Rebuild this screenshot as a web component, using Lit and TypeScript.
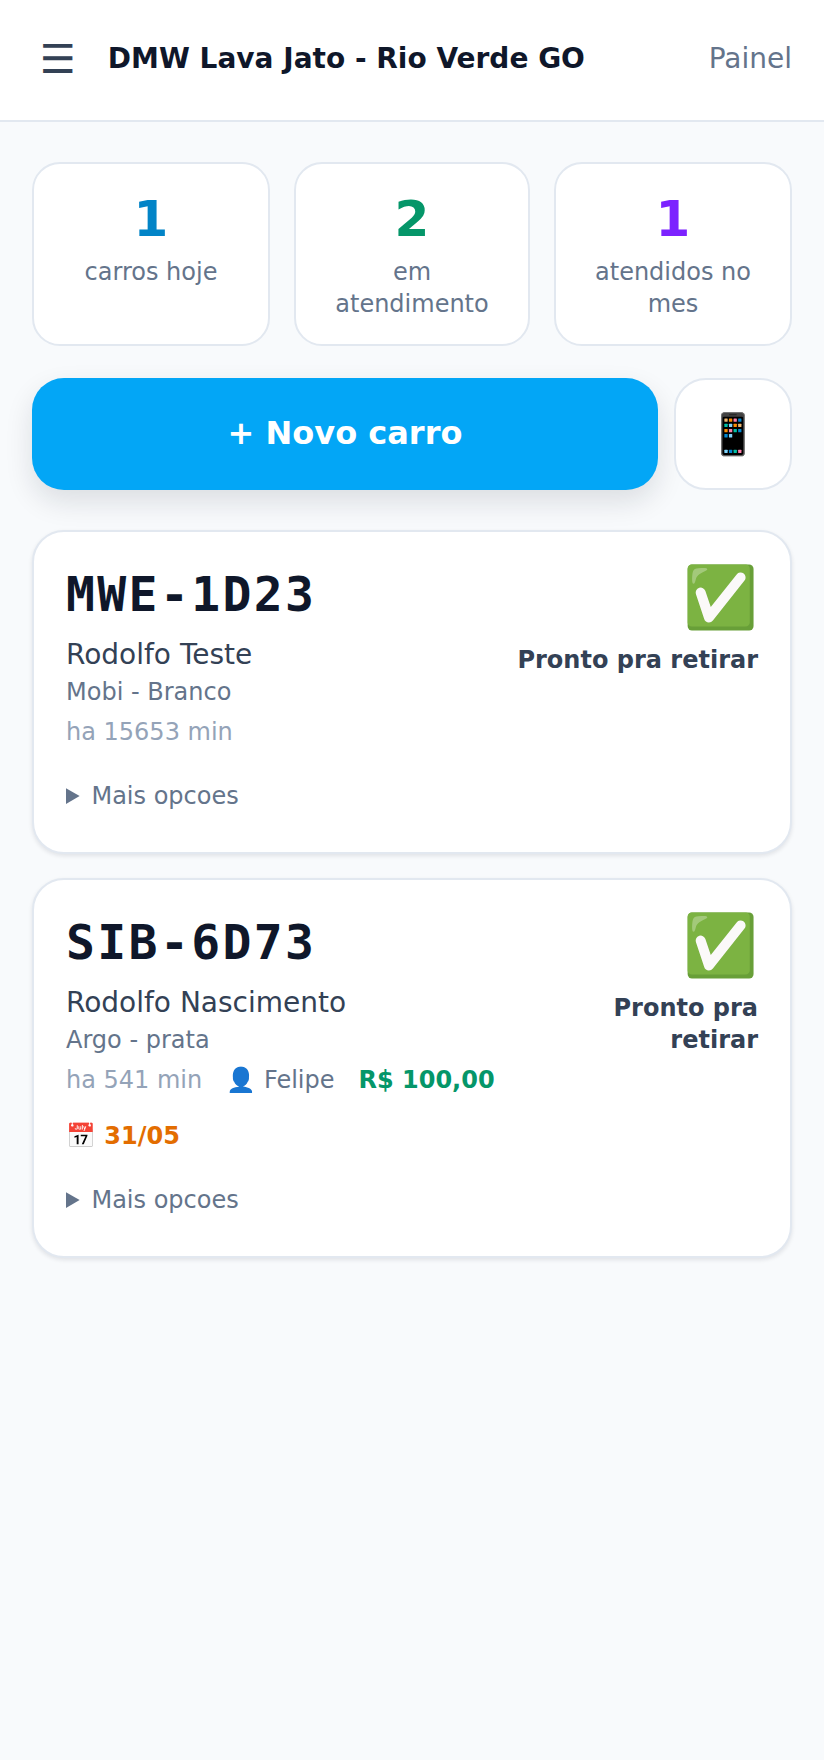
import { LitElement, html, css, nothing } from 'lit'
import { customElement } from 'lit/decorators.js'

interface Car {
  plate: string
  owner: string
  model: string
  since: string
  washer?: string
  price?: string
  date?: string
}

const cars: Car[] = [
  { plate: 'MWE-1D23', owner: 'Rodolfo Teste', model: 'Mobi - Branco', since: 'ha 15653 min' },
  {
    plate: 'SIB-6D73',
    owner: 'Rodolfo Nascimento',
    model: 'Argo - prata',
    since: 'ha 541 min',
    washer: 'Felipe',
    price: 'R$ 100,00',
    date: '31/05',
  },
]

const stats = [
  { value: '1', label: 'carros hoje', tone: 'blue' },
  { value: '2', label: 'em atendimento', tone: 'green' },
  { value: '1', label: 'atendidos no mes', tone: 'purple' },
]

@customElement('app-root')
export class AppRoot extends LitElement {
  static styles = css`
    :host {
      display: block;
      min-height: 1760px;
      background: #f8fafc;
      font-family: "DejaVu Sans", sans-serif;
      color: #0f172a;
    }

    header {
      display: flex;
      align-items: center;
      justify-content: space-between;
      gap: 16px;
      box-sizing: border-box;
      height: 122px;
      padding: 0 32px 4px;
      background: #fff;
      border-bottom: 2px solid #e2e8f0;
    }

    .brand {
      display: flex;
      align-items: center;
      gap: 32px;
    }

    .menu {
      margin-top: 2px;
      font-size: 40px;
      line-height: 1;
      color: #334155;
      padding-left: 8px;
    }

    .brand h1 {
      margin: 0;
      font-size: 28px;
      font-weight: 700;
    }

    .link {
      font-size: 28px;
      color: #64748b;
    }

    main {
      display: flex;
      flex-direction: column;
      padding: 40px 32px;
    }

    .stats {
      display: grid;
      grid-template-columns: 237fr 235fr 237fr;
      gap: 24px;
    }

    .stat {
      padding: 24px;
      background: #fff;
      border: 2px solid #e2e8f0;
      border-radius: 28px;
      text-align: center;
    }

    .stat b {
      display: block;
      margin-bottom: 6px;
      font-size: 50px;
      line-height: 62px;
    }

    .stat span {
      display: block;
      font-size: 24px;
      line-height: 32px;
      color: #64748b;
    }

    .blue { color: #0284c7; }
    .green { color: #059669; }
    .purple { color: #7c22ff; }

    .actions {
      display: flex;
      gap: 16px;
      margin-top: 32px;
    }

    .add {
      flex: 1;
      height: 112px;
      padding: 0 0 2px;
      border: 0;
      border-radius: 32px;
      background: #03a6f6;
      color: #fff;
      font: 700 32px "DejaVu Sans", sans-serif;
      box-shadow: 0 12px 28px rgba(15, 23, 42, 0.12);
    }

    .phone {
      display: flex;
      align-items: center;
      justify-content: center;
      width: 118px;
      height: 112px;
      box-sizing: border-box;
      background: #fff;
      border: 2px solid #e2e8f0;
      border-radius: 32px;
      font-size: 40px;
    }

    .cards {
      display: flex;
      flex-direction: column;
      gap: 24px;
      margin-top: 40px;
    }

    .card {
      padding: 32px 32px 38px;
      background: #fff;
      border: 2px solid #e2e8f0;
      border-radius: 32px;
      box-shadow: 0 2px 4px rgba(15, 23, 42, 0.1);
    }

    .top {
      display: flex;
      justify-content: space-between;
      gap: 16px;
    }

    .info {
      min-width: 0;
    }

    .plate {
      font: 700 48px/60px "DejaVu Sans Mono", monospace;
      letter-spacing: 2.4px;
    }

    .owner {
      margin-top: 13px;
      font-size: 28px;
      line-height: 36px;
      color: #334155;
    }

    .model {
      margin-top: 1px;
      font-size: 24px;
      line-height: 36px;
      color: #64748b;
    }

    .meta {
      display: flex;
      flex-wrap: wrap;
      gap: 20px 24px;
      margin-top: 4px;
      font-size: 24px;
      line-height: 36px;
      color: #64748b;
    }

    .since { color: #94a3b8; }
    .price { color: #059669; font-weight: 700; }
    .date { color: #e36d00; font-weight: 700; }

    .status {
      text-align: right;
    }

    .status i {
      display: block;
      margin-bottom: 14px;
      font-style: normal;
      font-size: 60px;
      line-height: 66px;
    }

    .status span {
      display: block;
      font-size: 24px;
      line-height: 32px;
      font-weight: 700;
      color: #334155;
    }

    details {
      margin-top: 28px;
      font-size: 24px;
      line-height: 36px;
      color: #64748b;
    }
  `

  private renderCar(car: Car) {
    return html`
      <article class="card">
        <div class="top">
          <div class="info">
            <div class="plate">${car.plate}</div>
            <div class="owner">${car.owner}</div>
            <div class="model">${car.model}</div>
            <div class="meta">
              <span class="since">${car.since}</span>
              ${car.washer ? html`<span>👤 ${car.washer}</span>` : nothing}
              ${car.price ? html`<span class="price">${car.price}</span>` : nothing}
              ${car.date ? html`<span class="date">📅 ${car.date}</span>` : nothing}
            </div>
          </div>
          <div class="status">
            <i>✅</i>
            <span>Pronto pra retirar</span>
          </div>
        </div>
        <details>
          <summary>Mais opcoes</summary>
        </details>
      </article>
    `
  }

  render() {
    return html`
      <header>
        <div class="brand">
          <span class="menu">☰</span>
          <h1>DMW Lava Jato - Rio Verde GO</h1>
        </div>
        <span class="link">Painel</span>
      </header>
      <main>
        <section class="stats">
          ${stats.map(
            (s) => html`
              <div class="stat">
                <b class=${s.tone}>${s.value}</b>
                <span>${s.label}</span>
              </div>
            `
          )}
        </section>
        <div class="actions">
          <button class="add">+ Novo carro</button>
          <div class="phone">📱</div>
        </div>
        <section class="cards">${cars.map((c) => this.renderCar(c))}</section>
      </main>
    `
  }
}
